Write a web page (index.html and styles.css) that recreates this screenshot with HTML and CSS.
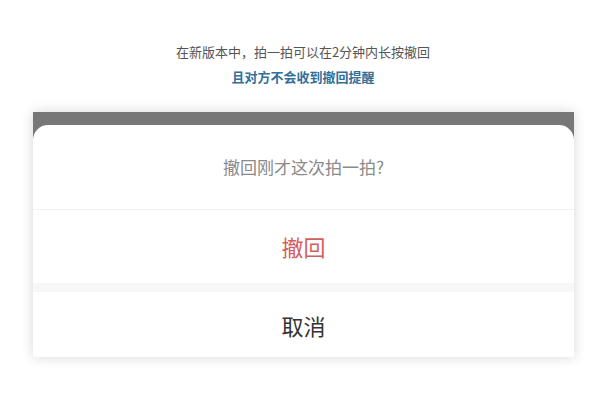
FILE: index.html
```html
<!DOCTYPE html>
<html lang="zh-CN">
<head>
    <meta charset="UTF-8">
    <title>撤回拍一拍</title>
    <link rel="stylesheet" href="styles.css">
</head>
<body>

<div class="page">
    <div class="intro">
        <p class="intro-line">在新版本中，拍一拍可以在2分钟内长按撤回</p>
        <p class="intro-line intro-strong">且对方不会收到撤回提醒</p>
    </div>

    <div class="shot">
        <div class="sheet">
            <div class="sheet-title">撤回刚才这次拍一拍?</div>
            <div class="sheet-btn sheet-danger">撤回</div>
            <div class="sheet-gap"></div>
            <div class="sheet-btn sheet-cancel">取消</div>
        </div>
    </div>
</div>

</body>
</html>
```

FILE: styles.css
```css
body {
    margin: 0;
    padding: 0;
    background-color: #fff;
    font-family: "Noto Sans CJK SC", "Liberation Sans", sans-serif;
}
.page {
    width: 600px;
    height: 400px;
    overflow: hidden;
}
.intro {
    padding-top: 39px;
    padding-left: 6px;
    text-align: center;
}
.intro-line {
    margin: 0;
    font-size: 13px;
    line-height: 25px;
    color: #555;
}
.intro-strong {
    font-weight: bold;
    color: #336f99;
}
.shot {
    margin: 23px 0 0 33px;
    width: 541px;
    padding-top: 13px;
    background-color: #777;
    box-shadow: 0 0 12px rgba(0, 0, 0, 0.16);
}
.sheet {
    background-color: #fff;
    border-radius: 15px 15px 0 0;
}
.sheet-title {
    height: 84px;
    line-height: 84px;
    text-align: center;
    font-size: 17px;
    color: #8a8a8a;
    border-bottom: 1px solid #f1f1f1;
}
.sheet-btn {
    text-align: center;
    font-size: 22px;
}
.sheet-danger {
    height: 73px;
    line-height: 72px;
    color: #d45d5d;
}
.sheet-gap {
    height: 9px;
    background-color: #f7f7f7;
}
.sheet-cancel {
    height: 65px;
    line-height: 67px;
    color: #333;
}
```
